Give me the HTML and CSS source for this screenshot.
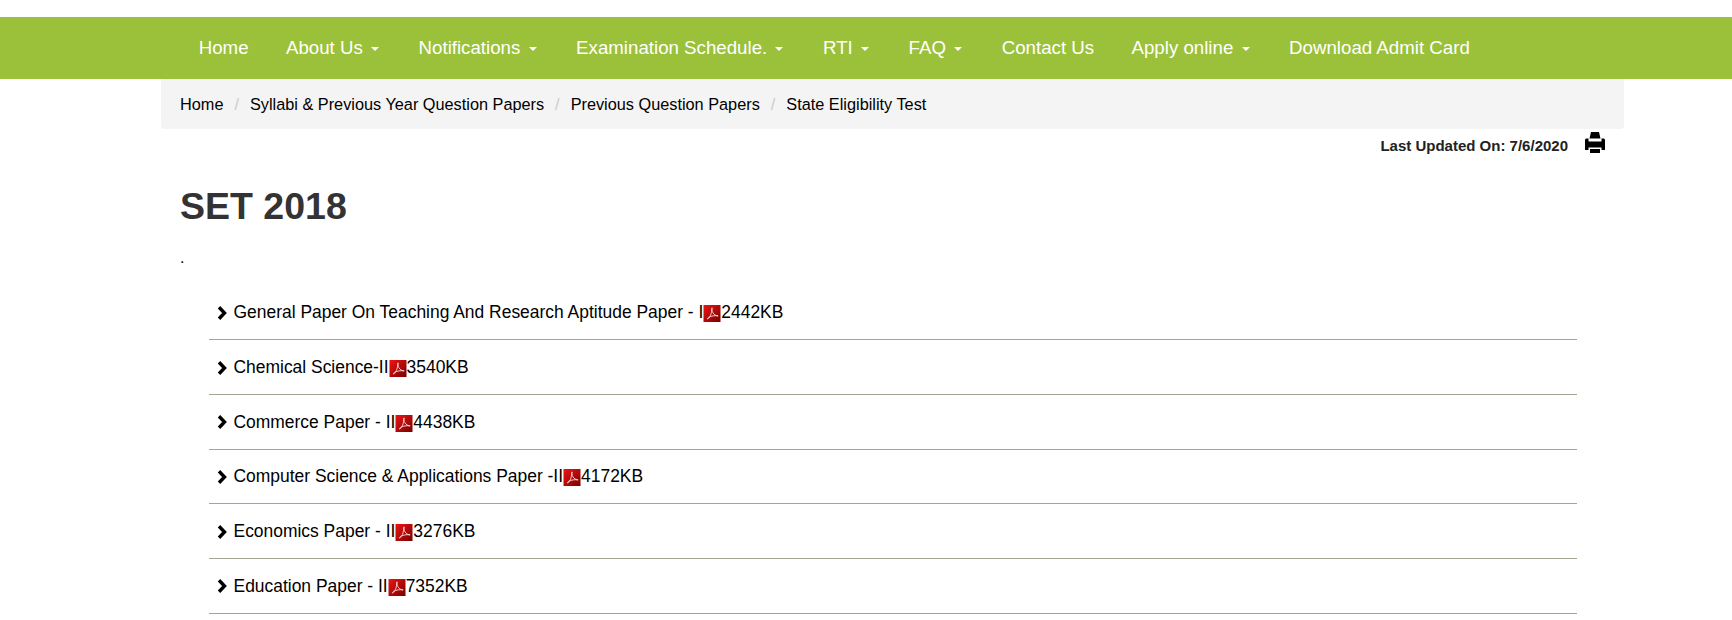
FILE: index.html
```html
<!DOCTYPE html>
<html lang="en">
  <head>
    <meta charset="UTF-8">
    <meta name="viewport" content="width=device-width, initial-scale=1.0">
    <title>SET 2018</title>
    <link rel="stylesheet" href="styles.css">
  </head>
  <body>
    <svg class="svg-defs" width="0" height="0" aria-hidden="true">
      <defs>
        <linearGradient id="pdfRed" x1="0" y1="0" x2="1" y2="1">
          <stop offset="0" stop-color="#f01414"></stop>
          <stop offset="1" stop-color="#780000"></stop>
        </linearGradient>
        <symbol id="pdf" viewBox="0 0 18 18">
          <rect width="18" height="18" fill="url(#pdfRed)"></rect>
          <path d="M9 3C8.500 6 9.500 8 11 9.500c1.500 1.500 3 2 4.500 2-3-.5-7.500 0-10 1.500C4 14 3.500 15.500 5 14.500c1.500-1 3.500-5 3.700-9.500.1-1.500.5-2 .3-2z" fill="none" stroke="#fbeaea" stroke-width=".9"></path>
        </symbol>
        <symbol id="chevron" viewBox="0 0 10 14">
          <path d="M2 1.300 7.500 7 2 12.700" fill="none" stroke="#000" stroke-width="3.400"></path>
        </symbol>
      </defs>
    </svg>

    <nav class="navbar">
      <ul class="nav-list">
        <li><a href="#">Home</a></li>
        <li><a href="#">About Us <span class="caret"></span></a></li>
        <li><a href="#">Notifications <span class="caret"></span></a></li>
        <li><a href="#">Examination Schedule. <span class="caret"></span></a></li>
        <li><a href="#">RTI <span class="caret"></span></a></li>
        <li><a href="#">FAQ <span class="caret"></span></a></li>
        <li><a href="#">Contact Us</a></li>
        <li><a href="#">Apply online <span class="caret"></span></a></li>
        <li><a href="#">Download Admit Card</a></li>
      </ul>
    </nav>

    <div class="container">
      <ol class="breadcrumb">
        <li><a href="#">Home</a></li>
        <li><a href="#">Syllabi &amp; Previous Year Question Papers</a></li>
        <li><a href="#">Previous Question Papers</a></li>
        <li><a href="#">State Eligibility Test</a></li>
      </ol>

      <div class="updated">
        <span>Last Updated On: 7/6/2020</span>
        <svg class="print-icon" viewBox="0 0 20 21" aria-hidden="true">
          <path d="M6 0h8l1.500 6.500h-11zM1.500 6.500h2v3h13v-3h2A1.500 1.500 0 0 1 20 8v10h-3.500v-2.500h-13V18H0V8a1.500 1.500 0 0 1 1.500-1.500zM5 17h10v4H5z" fill="#000"></path>
        </svg>
      </div>

      <h1 class="page-title">SET 2018</h1>
      <p class="dot">.</p>

      <ul class="paper-list">
        <li><svg class="chevron"><use href="#chevron"></use></svg><a href="#">General Paper On Teaching And Research Aptitude Paper - I<svg class="pdf"><use href="#pdf"></use></svg>2442KB</a></li>
        <li><svg class="chevron"><use href="#chevron"></use></svg><a href="#">Chemical Science-II<svg class="pdf"><use href="#pdf"></use></svg>3540KB</a></li>
        <li><svg class="chevron"><use href="#chevron"></use></svg><a href="#">Commerce Paper - II<svg class="pdf"><use href="#pdf"></use></svg>4438KB</a></li>
        <li><svg class="chevron"><use href="#chevron"></use></svg><a href="#">Computer Science &amp; Applications Paper -II<svg class="pdf"><use href="#pdf"></use></svg>4172KB</a></li>
        <li><svg class="chevron"><use href="#chevron"></use></svg><a href="#">Economics Paper - II<svg class="pdf"><use href="#pdf"></use></svg>3276KB</a></li>
        <li><svg class="chevron"><use href="#chevron"></use></svg><a href="#">Education Paper - II<svg class="pdf"><use href="#pdf"></use></svg>7352KB</a></li>
      </ul>
    </div>
  </body>
</html>
```

FILE: styles.css
```css
* {
  box-sizing: border-box;
}

body {
  margin: 0;
  padding-top: 17px;
  background: #fff;
  color: #000;
  font: 16px "Liberation Sans", Arial, sans-serif;
}

a {
  color: inherit;
  text-decoration: none;
}

.svg-defs {
  position: absolute;
}

.navbar {
  height: 62px;
  background: #9bc13a;
}

.nav-list {
  display: flex;
  margin: 0;
  padding: 0 0 0 180px;
  list-style: none;
}

.nav-list a {
  display: block;
  padding: 0 18.7px;
  color: #fff;
  font-size: 18.7px;
  line-height: 62px;
}

.caret {
  display: inline-block;
  margin: 0 2.2px 0 3px;
  vertical-align: middle;
  border-top: 4.5px solid #fff;
  border-left: 4.5px solid transparent;
  border-right: 4.5px solid transparent;
}

.container {
  width: 1463px;
  margin-left: 161px;
}

.breadcrumb {
  display: flex;
  height: 50px;
  margin: 0;
  padding: 1px 19px 0;
  align-items: center;
  list-style: none;
  background: #f4f4f4;
  border-radius: 0 0 4px 4px;
  font-size: 16.3px;
}

.breadcrumb li + li::before {
  content: "/";
  padding: 0 11px;
  color: #ccc;
}

.updated {
  display: flex;
  justify-content: flex-end;
  align-items: center;
  gap: 17px;
  height: 32px;
  padding-right: 19px;
  color: #222;
  font-size: 15px;
  font-weight: bold;
}

.print-icon {
  width: 20px;
  height: 21px;
  margin-top: -5px;
}

.page-title {
  margin: 23px 0 0 19px;
  color: #333;
  font-size: 37.5px;
  line-height: 44px;
}

.dot {
  margin: 19px 0 0 19px;
  line-height: 22px;
}

.paper-list {
  width: 1368px;
  margin: 16.5px 0 0 48px;
  padding: 0;
  list-style: none;
  font-size: 17.45px;
}

.paper-list li {
  display: flex;
  align-items: center;
  height: 54.7px;
  padding: 1px 0 0 8px;
  border-bottom: 1px solid #a5a594;
}

.chevron {
  width: 10px;
  height: 14px;
  margin-right: 6.5px;
  flex: none;
}

.pdf {
  width: 18px;
  height: 17px;
  vertical-align: -4px;
}
```
